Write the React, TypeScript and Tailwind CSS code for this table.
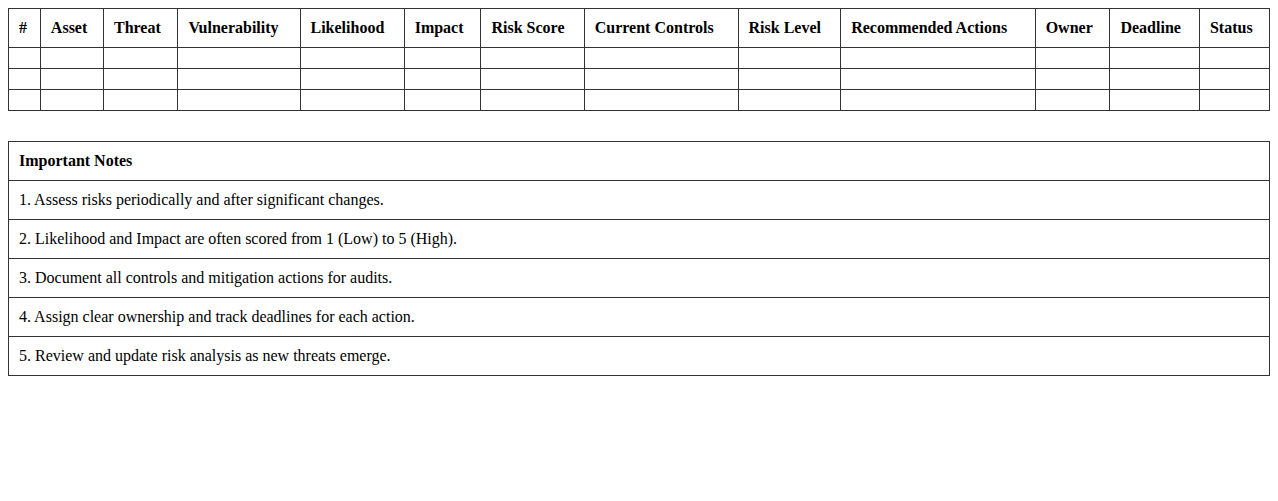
const columns = [
  '#',
  'Asset',
  'Threat',
  'Vulnerability',
  'Likelihood',
  'Impact',
  'Risk Score',
  'Current Controls',
  'Risk Level',
  'Recommended Actions',
  'Owner',
  'Deadline',
  'Status',
];

const notes = [
  '1. Assess risks periodically and after significant changes.',
  '2. Likelihood and Impact are often scored from 1 (Low) to 5 (High).',
  '3. Document all controls and mitigation actions for audits.',
  '4. Assign clear ownership and track deadlines for each action.',
  '5. Review and update risk analysis as new threats emerge.',
];

export default function App() {
  return (
    <div className="bg-white p-2 text-black text-base" style={{ fontFamily: '"Liberation Serif", "Times New Roman", serif' }}>
      {/* risk register */}
      <table className="w-full border-collapse">
        <thead>
          <tr>
            {columns.map(c => (
              <th key={c} className="border border-[#333] p-[10px] text-left font-bold leading-[18px]">
                {c}
              </th>
            ))}
          </tr>
        </thead>
        <tbody>
          {[0, 1, 2].map(r => (
            <tr key={r}>
              {columns.map(c => (
                <td key={c} className="border border-[#333] p-[10px]"></td>
              ))}
            </tr>
          ))}
        </tbody>
      </table>

      {/* notes */}
      <table className="w-full border-collapse mt-[30px]">
        <tbody>
          <tr>
            <td className="border border-[#333] p-[10px] font-bold leading-[18px]">Important Notes</td>
          </tr>
          {notes.map(n => (
            <tr key={n}>
              <td className="border border-[#333] p-[10px] leading-[18px]">{n}</td>
            </tr>
          ))}
        </tbody>
      </table>
    </div>
  );
}
